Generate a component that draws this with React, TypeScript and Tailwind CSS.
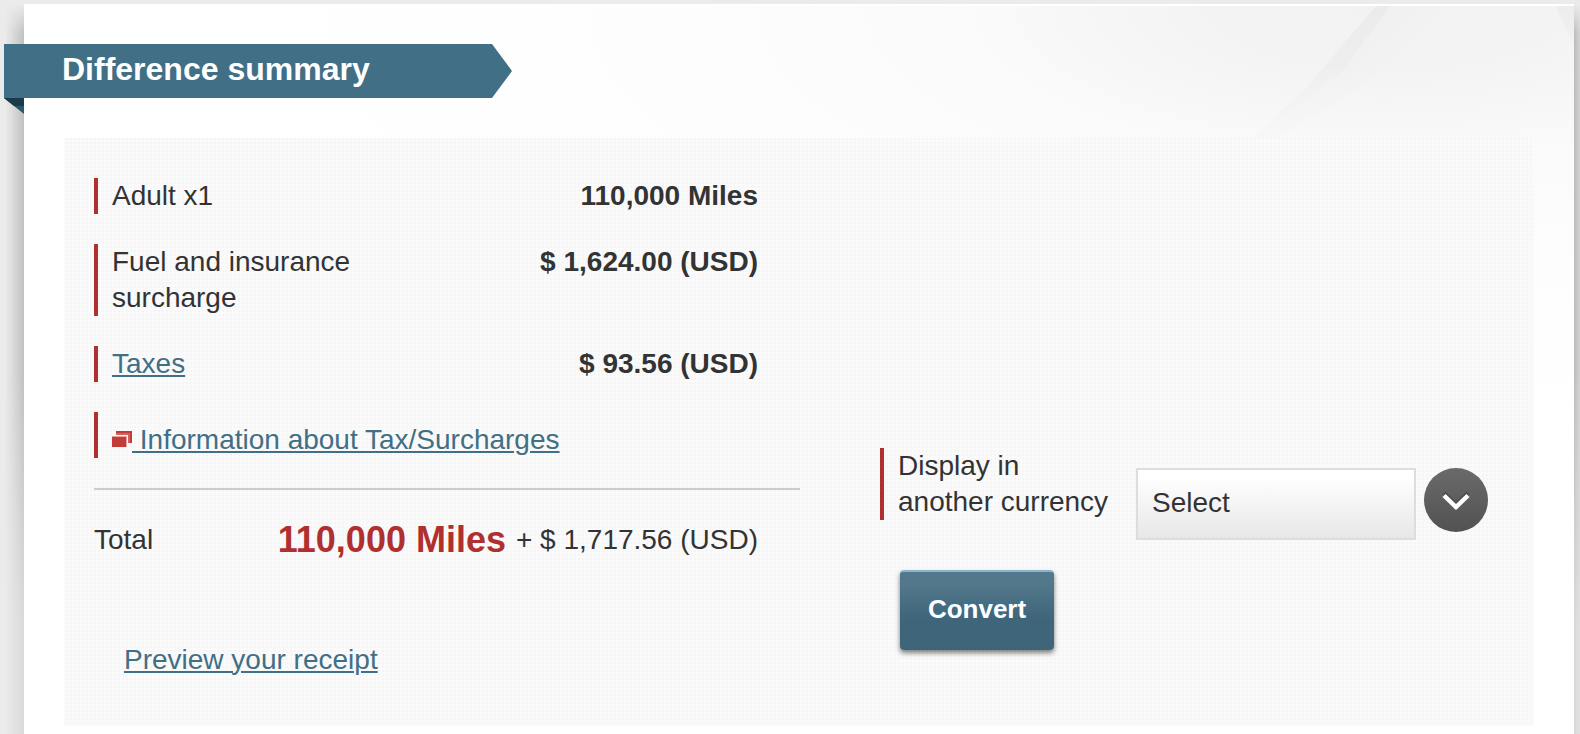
import { useState, type ReactNode } from 'react';

const FARES = [
  { label: 'Adult x1', amount: '110,000 Miles' },
  { label: 'Fuel and insurance surcharge', amount: '$ 1,624.00 (USD)' },
  { label: 'Taxes', amount: '$ 93.56 (USD)', href: '#taxes' },
];

const CURRENCIES = ['Select', 'USD', 'JPY', 'EUR', 'GBP'];

const LINK = 'text-[#416f86] underline decoration-2 underline-offset-2';

function GutterShadow({ side }: { side: 'left' | 'right' }) {
  return (
    <div
      className={
        side === 'left'
          ? 'w-6 shrink-0 bg-linear-to-l from-black/18 via-black/6 via-50% to-transparent to-80% mask-[linear-gradient(to_bottom,transparent,black_30px,black_50%,rgba(0,0,0,0.4)_85%)]'
          : 'w-1.5 shrink-0 bg-linear-to-r from-black/20 to-black/10 mask-[linear-gradient(to_bottom,transparent,black_30px,black_50%,rgba(0,0,0,0.4)_85%)]'
      }
    />
  );
}

function CardBackdrop() {
  return (
    <svg className="absolute top-0 right-0 w-[360px] h-[136px]" viewBox="0 0 360 136" aria-hidden="true">
      <defs>
        <linearGradient id="streak" x1="0" y1="0" x2="0" y2="1">
          <stop offset="0" stopColor="#000" stopOpacity="0.03" />
          <stop offset="1" stopColor="#000" stopOpacity="0.006" />
        </linearGradient>
        <linearGradient id="streak-fade" x1="0" y1="0" x2="1" y2="0.6">
          <stop offset="0.3" stopColor="#000" stopOpacity="0.012" />
          <stop offset="1" stopColor="#000" stopOpacity="0" />
        </linearGradient>
      </defs>
      <path d="M162 0 H176 L128 66 L36 134 L92 82Z" fill="url(#streak)" />
      <path d="M176 0 H230 L150 80 L60 134 L36 134 L128 66Z" fill="url(#streak-fade)" />
      <path d="M342 0 H360 V42Z" fill="url(#streak)" />
    </svg>
  );
}

function WindowIcon() {
  return (
    <svg className="inline-block w-5 h-4 mb-1.5" viewBox="0 0 20 16" aria-hidden="true">
      <path d="M4 0H20V12H16V4H4Z" fill="#c43c39" />
      <path d="M4 2H18V12H16V4H4Z" fill="#d06461" />
      <path d="M0 6H14V16H0Z" fill="#c43c39" />
      <path d="M14 6H15V16H14ZM0 5H15V6H0Z" fill="#e3a3a1" />
    </svg>
  );
}

function Banner({ children }: { children: ReactNode }) {
  return (
    <div className="relative w-[508px] -ml-5">
      <h1 className="h-[54px] pl-[58px] bg-[#416f86] text-white text-[32px] leading-[50px] font-bold [clip-path:polygon(0_0,488px_0,100%_50%,488px_100%,0_100%)]">
        {children}
      </h1>
      <svg className="absolute left-0 top-full w-5 h-4" viewBox="0 0 20 16" aria-hidden="true">
        <path d="M0 0H20V16Z" fill="#2a5a70" />
        <path d="M0 0H20V8L10 8Z" fill="#1d3a4a" />
      </svg>
    </div>
  );
}

export default function App() {
  const [currency, setCurrency] = useState('Select');

  return (
    <div className="min-h-screen flex pt-1 bg-[#ebebeb] text-[#333] text-[28px] leading-9 font-['Liberation_Sans',Arial,sans-serif]">
      <GutterShadow side="left" />

      <main className="relative flex-1 min-w-0 pt-10 pb-2 border-t-2 border-white bg-white bg-[radial-gradient(ellipse_75%_420px_at_88%_0,#f2f2f2,#f3f3f3_15%,#fafafa_35%,#fdfdfd_60%,white)]">
        <CardBackdrop />
        <div className="relative -mt-0.5">
          <Banner>Difference summary</Banner>

          <section className="flex flex-wrap mx-10 mt-10 pt-10 pb-12 pl-[30px] bg-[#fafafa] bg-[conic-gradient(#f5f5f5_25%,transparent_0)] bg-size-[4px_4px]">
            <div className="w-[706px]">
              <dl className="flex flex-col gap-[30px]">
                {FARES.map(({ label, amount, href }) => (
                  <div key={label} className="flex justify-between pr-[42px]">
                    <dt className="w-[290px] pl-3.5 border-l-4 border-[#b0302f]">
                      {href ? (
                        <a href={href} className={LINK}>
                          {label}
                        </a>
                      ) : (
                        label
                      )}
                    </dt>
                    <dd className="font-bold">{amount}</dd>
                  </div>
                ))}
              </dl>

              <p className="mt-[30px] pt-2.5 pl-3.5 border-l-4 border-[#b0302f]">
                <a href="#surcharges" className="text-[#416f86]">
                  <WindowIcon />
                  <span className={LINK}>&nbsp;Information about Tax/Surcharges</span>
                </a>
              </p>

              {/* total */}
              <div className="flex items-center justify-between mt-[30px] pt-8 pr-[42px] border-t-2 border-[#ccc]">
                <span>Total</span>
                <span className="flex items-center gap-2.5">
                  <strong className="text-[#b0302f] text-[36px]">110,000 Miles</strong>
                  <span>+ $ 1,717.56 (USD)</span>
                </span>
              </div>

              <p className="mt-[84px] pl-[30px]">
                <a href="#receipt" className={LINK}>
                  Preview your receipt
                </a>
              </p>
            </div>

            {/* currency conversion */}
            <form className="ml-20 mt-[270px]" onSubmit={(e) => e.preventDefault()}>
              <div className="flex items-start">
                <label htmlFor="currency" className="w-[240px] pl-3.5 border-l-4 border-[#b0302f]">
                  Display in another currency
                </label>
                <div className="relative flex ml-4 mt-5 gap-2">
                  <select
                    id="currency"
                    value={currency}
                    onChange={(e) => setCurrency(e.target.value)}
                    className="appearance-none w-[280px] h-[72px] pl-3.5 pb-0.5 border-2 border-[#ddd] bg-linear-to-b from-white from-10% to-[#e7e7e7]"
                  >
                    {CURRENCIES.map((c) => (
                      <option key={c}>{c}</option>
                    ))}
                  </select>
                  <svg className="w-16 h-16 pointer-events-none" viewBox="0 0 64 64" aria-hidden="true">
                    <defs>
                      <linearGradient id="knob" x1="0" y1="0" x2="0" y2="1">
                        <stop offset="0" stopColor="#6a6a6a" />
                        <stop offset="1" stopColor="#525252" />
                      </linearGradient>
                    </defs>
                    <circle cx="32" cy="32" r="32" fill="url(#knob)" />
                    <path d="M20 25L32 36.500L44 25" fill="none" stroke="#4e4e4e" strokeWidth="4" />
                    <path d="M20 27.500L32 39L44 27.500" fill="none" stroke="#fff" strokeWidth="4.500" />
                  </svg>
                </div>
              </div>
              <button
                type="submit"
                className="w-[154px] h-20 ml-5 mt-[30px] pb-1 rounded-sm border-t-2 border-[#8ab6cc] bg-linear-to-b from-[#54788b] from-15% to-[#3e657a] to-60% text-white text-[26px] font-bold text-shadow-[0_-2px_1px_#3a7394] shadow-[0_3px_5px_rgba(0,0,0,0.5)] cursor-pointer"
              >
                Convert
              </button>
            </form>
          </section>
        </div>
      </main>

      <GutterShadow side="right" />
    </div>
  );
}
